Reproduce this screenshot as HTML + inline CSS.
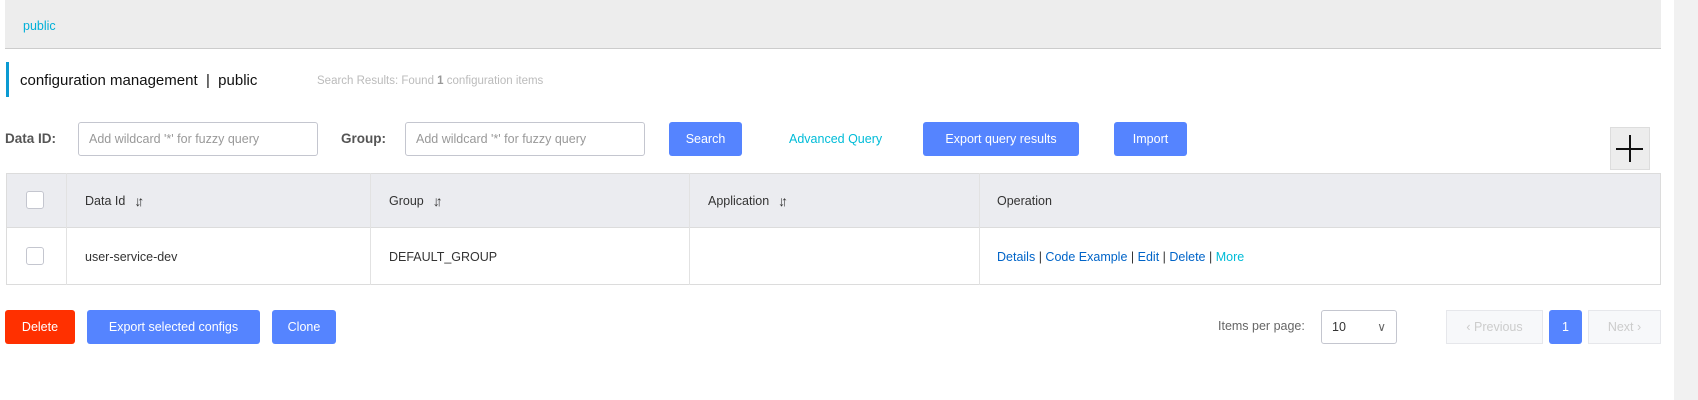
<!DOCTYPE html>
<html><head><style>
*{box-sizing:border-box;margin:0;padding:0}
body{width:1698px;height:400px;background:#fff;font-family:"Liberation Sans",sans-serif;position:relative;overflow:hidden;color:#333}
.a{position:absolute}
.hdr{left:5px;top:0;width:1656px;height:49px;background:#ededed;border-bottom:1px solid #ccc}
.btn{position:absolute;background:#5584ff;color:#fff;font-size:12.5px;border-radius:3px;display:flex;align-items:center;justify-content:center}
.inp{position:absolute;border:1px solid #c4c6cf;border-radius:3px;font-size:12.5px;color:#999;padding-left:10px;display:flex;align-items:center}
.lbl{position:absolute;font-size:13.5px;color:#555;font-weight:bold}
.cell{position:absolute;font-size:12.5px;color:#333;display:flex;align-items:center}
.vl{position:absolute;width:1px;background:#e2e2e2;top:173px;height:112px}
.cb{position:absolute;width:18px;height:18px;border:1px solid #c4c6cf;border-radius:3px;background:#fff}
.lk{color:#0064c8}
.sort{font-size:14px;margin-left:9px;letter-spacing:-4px;font-weight:bold;color:#333}
</style></head><body>
<div class="a hdr"></div>
<div class="a" style="left:23px;top:19px;font-size:12.5px;color:#00b0d8">public</div>
<div class="a" style="left:6px;top:62px;width:3px;height:35px;background:#0a9ad2"></div>
<div class="a" style="left:20px;top:72px;font-size:15px;color:#111">configuration management &nbsp;| &nbsp;public</div>
<div class="a" style="left:317px;top:75px;font-size:11.5px;color:#bbb">Search Results: Found <b style="color:#999">1</b> configuration items</div>

<div class="lbl" style="left:5px;top:131px">Data ID:</div>
<div class="inp" style="left:78px;top:122px;width:240px;height:34px">Add wildcard '*' for fuzzy query</div>
<div class="lbl" style="left:341px;top:131px">Group:</div>
<div class="inp" style="left:405px;top:122px;width:240px;height:34px">Add wildcard '*' for fuzzy query</div>
<div class="btn" style="left:669px;top:122px;width:73px;height:34px">Search</div>
<div class="a" style="left:789px;top:132px;font-size:12.5px;color:#00bcd8">Advanced Query</div>
<div class="btn" style="left:923px;top:122px;width:156px;height:34px">Export query results</div>
<div class="btn" style="left:1114px;top:122px;width:73px;height:34px">Import</div>
<div class="a" style="left:1610px;top:127px;width:40px;height:43px;background:#ededed;border:1px solid #ddd"></div>
<div class="a" style="left:1616px;top:148px;width:27px;height:1.5px;background:#111"></div>
<div class="a" style="left:1629px;top:135px;width:1.5px;height:27px;background:#111"></div>

<div class="a" style="left:6px;top:173px;width:1655px;height:112px;border:1px solid #dcdcdc"></div>
<div class="a" style="left:7px;top:174px;width:1653px;height:54px;background:#ebecf0;border-bottom:1px solid #dcdcdc"></div>
<div class="vl" style="left:66px"></div><div class="vl" style="left:370px"></div><div class="vl" style="left:689px"></div><div class="vl" style="left:979px"></div>
<div class="cb" style="left:26px;top:191px"></div>
<div class="cb" style="left:26px;top:247px"></div>
<div class="cell" style="left:85px;top:191px;height:20px">Data Id<span class="sort">↓↑</span></div>
<div class="cell" style="left:389px;top:191px;height:20px">Group<span class="sort">↓↑</span></div>
<div class="cell" style="left:708px;top:191px;height:20px">Application<span class="sort">↓↑</span></div>
<div class="cell" style="left:997px;top:191px;height:20px">Operation</div>
<div class="cell" style="left:85px;top:247px;height:20px">user-service-dev</div>
<div class="cell" style="left:389px;top:247px;height:20px">DEFAULT_GROUP</div>
<div class="cell" style="left:997px;top:247px;height:20px"><span class="lk">Details</span>&nbsp;|&nbsp;<span class="lk">Code Example</span>&nbsp;|&nbsp;<span class="lk">Edit</span>&nbsp;|&nbsp;<span class="lk">Delete</span>&nbsp;|&nbsp;<span style="color:#00bcd8">More</span></div>

<div class="btn" style="left:5px;top:310px;width:70px;height:34px;background:#ff3000">Delete</div>
<div class="btn" style="left:87px;top:310px;width:173px;height:34px">Export selected configs</div>
<div class="btn" style="left:272px;top:310px;width:64px;height:34px">Clone</div>
<div class="a" style="left:1218px;top:319px;font-size:12.5px;color:#666">Items per page:</div>
<div class="inp" style="left:1321px;top:310px;width:76px;height:34px;color:#333">10<span style="position:absolute;right:10px;color:#666;font-size:12px">∨</span></div>
<div class="a" style="left:1446px;top:310px;width:97px;height:34px;border:1px solid #e6e7eb;background:#f7f8fa;color:#ccc;font-size:12.5px;display:flex;align-items:center;justify-content:center">‹ Previous</div>
<div class="btn" style="left:1549px;top:310px;width:33px;height:34px">1</div>
<div class="a" style="left:1588px;top:310px;width:73px;height:34px;border:1px solid #e6e7eb;background:#f7f8fa;color:#ccc;font-size:12.5px;display:flex;align-items:center;justify-content:center">Next ›</div>
<div class="a" style="left:1674px;top:0;width:24px;height:400px;background:#f1f1f1"></div>
</body></html>
